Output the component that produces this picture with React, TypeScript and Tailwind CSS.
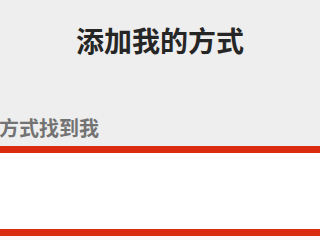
import React from "react";

const font = { fontFamily: '"Noto Sans CJK SC", "Noto Sans", sans-serif' };

const App = () => {
    return (
        <div className="w-[320px] h-[240px] overflow-hidden bg-[#eeeeee]" style={font}>
            {/* 标题 */}
            <div className="h-[80px] flex items-center justify-center">
                <h1 className="text-[28px] leading-[36px] font-bold text-[#262626]">添加我的方式</h1>
            </div>

            {/* 副标题 */}
            <div className="pt-[34px] -ml-[1px]">
                <p className="text-[20px] leading-[28px] font-bold text-[#737373] whitespace-nowrap">方式找到我</p>
            </div>

            {/* 输入框 */}
            <div className="mt-[4px] h-[90px] bg-white border-y-[7px] border-[#da2a0f]" />
            <div className="h-[10px] bg-[#fdf6f4]" />
        </div>
    );
};

export default App;
